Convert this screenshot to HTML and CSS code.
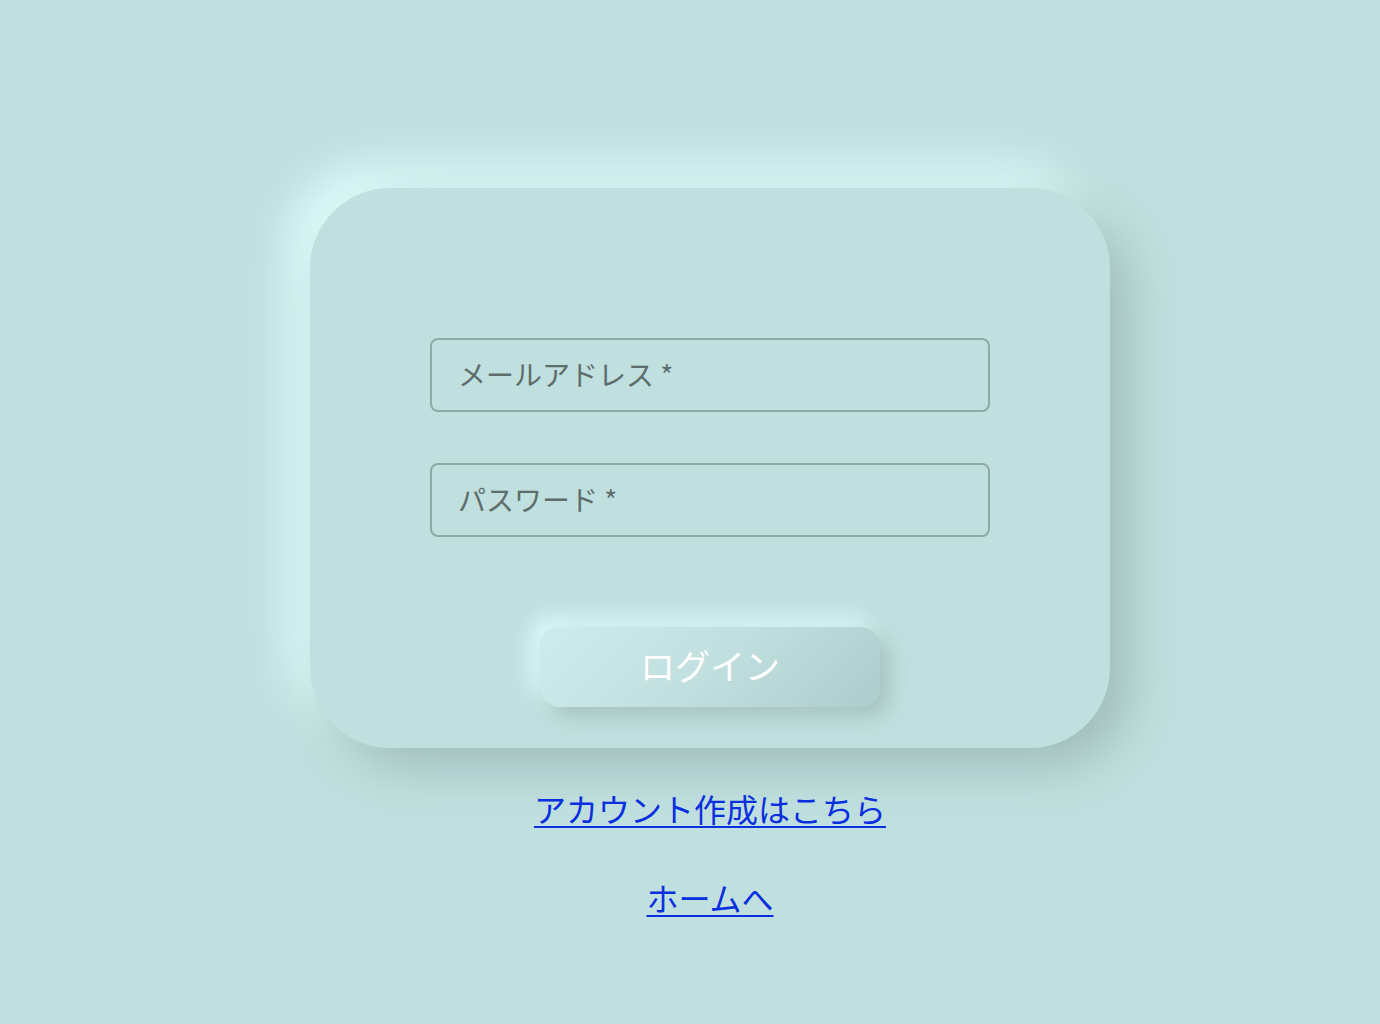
FILE: index.html
```html
<!DOCTYPE html>
<html lang="ja">
<head>
<meta charset="utf-8">
<title>ログイン</title>
<link rel="stylesheet" href="styles.css">
</head>
<body>
<main class="page">
  <form class="card">
    <div class="field"><input class="input" type="email" placeholder="メールアドレス *"></div>
    <div class="field field-second"><input class="input" type="password" placeholder="パスワード *"></div>
    <button class="login-btn" type="button">ログイン</button>
  </form>
  <nav class="links">
    <a class="link" href="#">アカウント作成はこちら</a>
    <a class="link link-home" href="#">ホームへ</a>
  </nav>
</main>
</body>
</html>
```
FILE: styles.css
```css
* { box-sizing: border-box; }
html, body { margin: 0; padding: 0; }
body {
  background: #c0e0df;
  font-family: "Noto Sans CJK JP", "Noto Sans", sans-serif;
  min-height: 1024px;
}
.page {
  display: flex;
  flex-direction: column;
  align-items: center;
  padding-top: 188px;
  padding-left: 40px;
}
.card {
  width: 800px;
  height: 560px;
  border-radius: 80px;
  background: #c0e0df;
  box-shadow: 20px 20px 50px #9fbcbb, -20px -20px 45px #e0ffff;
  padding: 150px 120px 41px;
  display: flex;
  flex-direction: column;
  align-items: center;
}
.field { width: 560px; }
.field-second { margin-top: 51px; }
.input {
  width: 100%;
  height: 74px;
  border: 2px solid #8fa8a8;
  border-radius: 8px;
  background: transparent;
  padding: 0 26px 2px;
  font-family: inherit;
  font-size: 28px;
  color: #4f5f5f;
  outline: none;
}
.input::placeholder { color: #5d6d6c; }
.login-btn {
  margin-top: 90px;
  width: 340px;
  height: 80px;
  border: none;
  border-radius: 20px;
  background: linear-gradient(135deg, #cdeceb 0%, #c0dfde 50%, #adcdcc 100%);
  box-shadow: 10px 10px 20px #a6c3c2, -10px -10px 20px #daf9f9;
  color: #ffffff;
  font-family: inherit;
  font-size: 35px;
  padding: 0 0 5px;
  cursor: pointer;
}
.links {
  display: flex;
  flex-direction: column;
  align-items: center;
  margin-top: 36px;
}
.link {
  color: #0a2fe0;
  font-size: 32px;
  line-height: 48px;
  text-decoration: underline;
  text-decoration-thickness: 2px;
  text-underline-offset: 4px;
}
.link-home { margin-top: 41px; }
```
